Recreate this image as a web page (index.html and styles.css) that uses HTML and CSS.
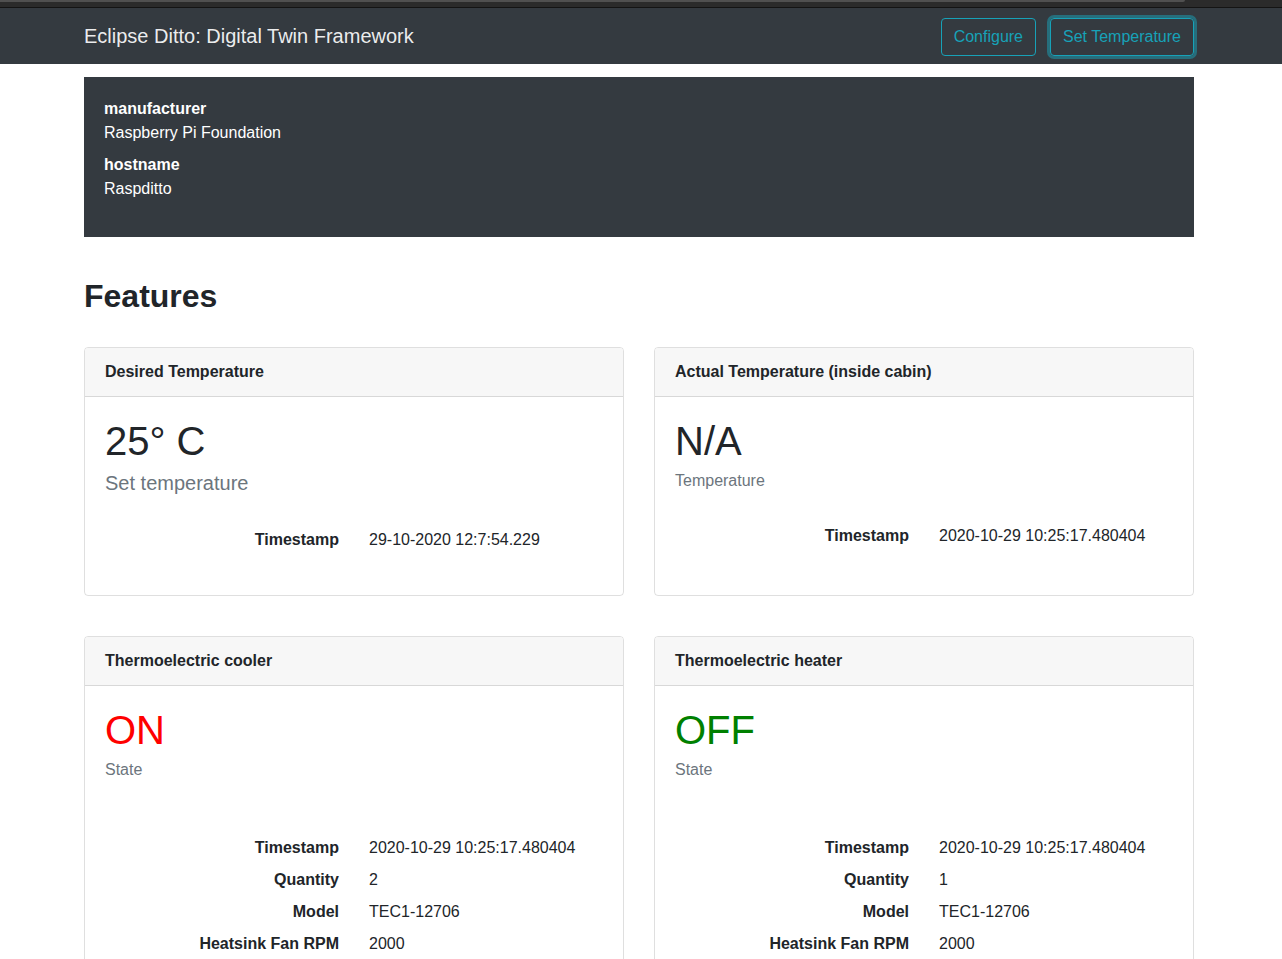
FILE: index.html
```html
<!DOCTYPE html>
<html lang="en">
<head>
<meta charset="utf-8">
<title>Eclipse Ditto: Digital Twin Framework</title>
<link rel="stylesheet" href="styles.css">
</head>
<body>
<div class="topstrip"><div class="topstrip-bar"></div></div>
<nav class="navbar">
  <div class="container nav-inner">
    <span class="brand">Eclipse Ditto: Digital Twin Framework</span>
    <div class="nav-actions">
      <button class="btn">Configure</button>
      <button class="btn btn-focus">Set Temperature</button>
    </div>
  </div>
</nav>
<main class="container">
  <section class="info">
    <dl class="info-list">
      <dt>manufacturer</dt>
      <dd>Raspberry Pi Foundation</dd>
      <dt>hostname</dt>
      <dd>Raspditto</dd>
    </dl>
  </section>
  <h2 class="section-title">Features</h2>
  <div class="cards">
    <div class="card">
      <div class="card-header">Desired Temperature</div>
      <div class="card-body">
        <h1 class="card-title">25° C</h1>
        <h5 class="card-subtitle large">Set temperature</h5>
        <dl class="props props-short">
          <dt>Timestamp</dt><dd>29-10-2020 12:7:54.229</dd>
        </dl>
      </div>
    </div>
    <div class="card">
      <div class="card-header">Actual Temperature (inside cabin)</div>
      <div class="card-body">
        <h1 class="card-title">N/A</h1>
        <h6 class="card-subtitle">Temperature</h6>
        <dl class="props props-short">
          <dt>Timestamp</dt><dd>2020-10-29 10:25:17.480404</dd>
        </dl>
      </div>
    </div>
    <div class="card">
      <div class="card-header">Thermoelectric cooler</div>
      <div class="card-body">
        <h1 class="card-title on">ON</h1>
        <h6 class="card-subtitle">State</h6>
        <dl class="props props-long">
          <dt>Timestamp</dt><dd>2020-10-29 10:25:17.480404</dd>
          <dt>Quantity</dt><dd>2</dd>
          <dt>Model</dt><dd>TEC1-12706</dd>
          <dt>Heatsink Fan RPM</dt><dd>2000</dd>
        </dl>
      </div>
    </div>
    <div class="card">
      <div class="card-header">Thermoelectric heater</div>
      <div class="card-body">
        <h1 class="card-title off">OFF</h1>
        <h6 class="card-subtitle">State</h6>
        <dl class="props props-long">
          <dt>Timestamp</dt><dd>2020-10-29 10:25:17.480404</dd>
          <dt>Quantity</dt><dd>1</dd>
          <dt>Model</dt><dd>TEC1-12706</dd>
          <dt>Heatsink Fan RPM</dt><dd>2000</dd>
        </dl>
      </div>
    </div>
  </div>
</main>
</body>
</html>
```

FILE: styles.css
```css
* { box-sizing: border-box; }
html, body { margin: 0; padding: 0; }
body {
  font-family: "Liberation Sans", Arial, sans-serif;
  font-size: 16px;
  line-height: 1.5;
  color: #212529;
  background: #fff;
  overflow: hidden;
}
.topstrip {
  height: 8px;
  background: #2b2b2b;
  border-bottom: 1px solid #141414;
}
.topstrip-bar {
  width: 1185px;
  height: 2px;
  background: #505050;
  border-bottom-right-radius: 2px;
}
.container {
  width: 1110px;
  margin-left: 84px;
}
.navbar {
  background: #343a40;
  height: 56px;
}
.nav-inner {
  height: 56px;
  display: flex;
  align-items: center;
  justify-content: space-between;
}
.brand {
  font-size: 20px;
  line-height: 30px;
  color: rgba(255,255,255,.92);
}
.nav-actions {
  display: flex;
  gap: 14px;
  padding-top: 1px;
}
.btn {
  font-family: inherit;
  font-size: 16px;
  line-height: 24px;
  padding: 6px 12px;
  color: #17a2b8;
  background: transparent;
  border: 1px solid #17a2b8;
  border-radius: 4px;
  margin: 0;
}
.btn-focus {
  box-shadow: 0 0 0 3px rgba(23,162,184,.5);
}
.info {
  margin-top: 13px;
  background: #343a40;
  color: #fff;
  padding: 20px;
}
.info-list { margin: 0 0 16px; }
.info-list dt { font-weight: 700; }
.info-list dd { margin: 0 0 8px; }
.info-list dd:last-child { margin-bottom: 0; }
.section-title {
  font-size: 32px;
  line-height: 1.2;
  font-weight: 700;
  margin: 40px 0 32px;
}
.cards {
  display: grid;
  grid-template-columns: 540px 540px;
  column-gap: 30px;
  row-gap: 40px;
}
.card {
  border: 1px solid rgba(0,0,0,.125);
  border-radius: 4px;
  display: flex;
  flex-direction: column;
}
.card-header {
  background: #f7f7f7;
  border-bottom: 1px solid rgba(0,0,0,.125);
  padding: 12px 20px;
  font-weight: 700;
  line-height: 24px;
  border-radius: 3px 3px 0 0;
}
.card-body {
  padding: 20px;
  flex: 1;
}
.card-title {
  font-size: 40px;
  line-height: 1.2;
  font-weight: 400;
  margin: 0 0 12px;
}
.card-title.on { color: #ff0000; }
.card-title.off { color: #008000; }
.card-subtitle {
  margin: -6px 0 0;
  font-size: 16px;
  line-height: 1.2;
  font-weight: 400;
  color: #6c757d;
}
.card-subtitle.large { font-size: 20px; }
.props {
  display: grid;
  grid-template-columns: 1fr 1fr;
  column-gap: 30px;
  row-gap: 8px;
  margin: 0 0 16px;
}
.props-short { margin: 33px 0 23px; }
.props-long { margin-top: 56px; }
.props dt {
  font-weight: 700;
  text-align: right;
}
.props dd { margin: 0; }
```
